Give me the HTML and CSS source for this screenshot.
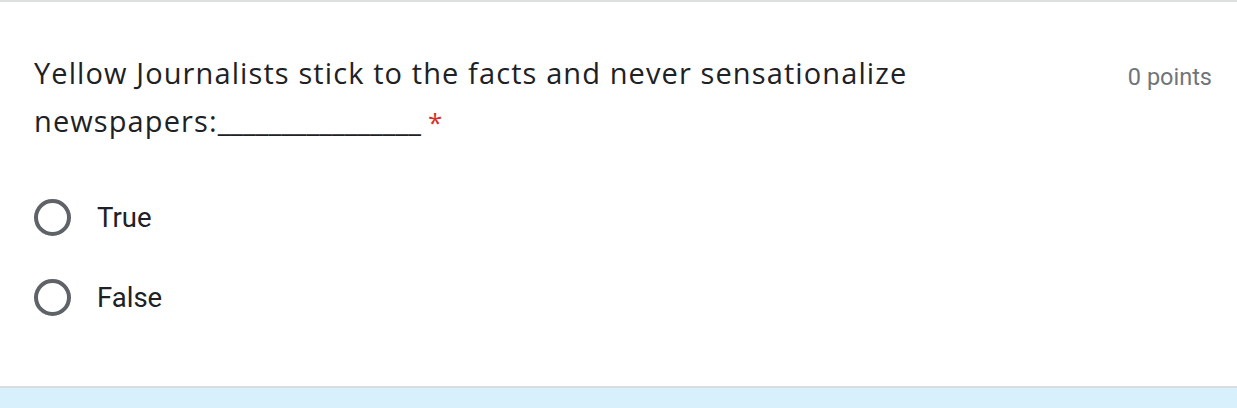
FILE: index.html
```html
<!DOCTYPE html>
<html>
<head>
<meta charset="utf-8">
<link rel="stylesheet" href="styles.css">
</head>
<body>
<div class="card">
  <div class="head">
    <div class="title"><span>Yellow Journalists stick to the facts and never sensationalize</span> <span>newspapers:</span><span class="blank">________________</span><span class="req">*</span></div>
    <div class="points">0 points</div>
  </div>
  <div class="options">
    <label class="opt"><span class="radio"></span><span class="lbl">True</span></label>
    <label class="opt"><span class="radio"></span><span class="lbl">False</span></label>
  </div>
</div>
<div class="next"></div>
</body>
</html>
```
FILE: styles.css
```css
html, body {
  margin: 0;
  padding: 0;
  background: #ffffff;
}
body {
  width: 1237px;
  height: 408px;
  overflow: hidden;
  display: flex;
  flex-direction: column;
}
.card {
  border-top: 2px solid #dedfe1;
  border-bottom: 2px solid #dadce0;
  box-sizing: border-box;
  height: 388px;
  padding: 47px 25px 0 34px;
  display: flex;
  flex-direction: column;
}
.head {
  display: flex;
  justify-content: space-between;
  align-items: flex-start;
}
.title {
  font-family: "Open Sans", Roboto, sans-serif;
  font-size: 29px;
  line-height: 48px;
  letter-spacing: 1.1px;
  color: #202124;
  width: 920px;
}
.blank {
  letter-spacing: 0;
}
.req {
  color: #d93025;
  font-size: 26px;
  margin-left: 7px;
}
.points {
  font-family: Roboto, "Noto Sans", sans-serif;
  font-size: 23.5px;
  color: #70757a;
  line-height: 48px;
  padding-top: 4px;
}
.options {
  display: flex;
  flex-direction: column;
  gap: 43px;
  margin-top: 53px;
}
.opt {
  display: flex;
  align-items: center;
  gap: 26px;
  height: 37px;
}
.radio {
  width: 37px;
  height: 37px;
  box-sizing: border-box;
  border: 4px solid #5f6368;
  border-radius: 50%;
}
.lbl {
  font-family: Roboto, "Noto Sans", sans-serif;
  font-size: 27.5px;
  color: #202124;
}
.next {
  flex: 1;
  background: #d8f0fb;
}
```
